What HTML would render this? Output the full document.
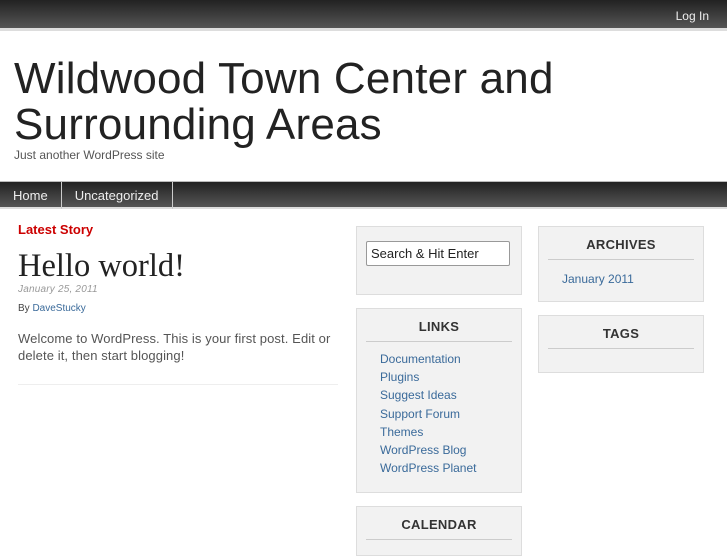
<!DOCTYPE html>
<html><head><meta charset="utf-8"><style>
body{margin:0;width:727px;height:545px;overflow:hidden;background:#fff;font-family:"Liberation Sans",sans-serif;position:relative}
.top{position:absolute;left:0;top:0;width:727px;height:28px;background:linear-gradient(#222,#555);border-bottom:3px solid #ddd}
.login{position:absolute;right:18px;top:9px;color:#eee;font:12px "Liberation Sans",sans-serif}
h1{position:absolute;left:14px;top:56px;margin:0;font:normal 44px/46px "Liberation Sans",sans-serif;color:#222;letter-spacing:0.2px}
.desc{position:absolute;left:14px;top:148px;font:12px "Liberation Sans",sans-serif;color:#555}
.nav{position:absolute;left:0;top:181px;width:727px;height:25px;background:linear-gradient(#222,#555);border-top:1px solid #bbb;border-bottom:2px solid #ddd}
.nav span{float:left;color:#eee;font:13px/27px "Liberation Sans",sans-serif;padding:0 13px;border-right:1px solid #ccc}
.abs{position:absolute}
.box{position:absolute;background:#f2f2f2;border:1px solid #ddd;box-sizing:border-box}
.box h3{margin:0 9px;text-align:center;font:bold 13px "Liberation Sans",sans-serif;color:#333;border-bottom:1px solid #ccc;padding:10px 0 7px;letter-spacing:0.3px}
.lk{color:#3a6a9a;font-size:12px;line-height:18.2px;letter-spacing:0}
</style></head><body>
<div class="top"><span class="login">Log In</span></div>
<h1>Wildwood Town Center and<br>Surrounding Areas</h1>
<div class="desc">Just another WordPress site</div>
<div class="nav"><span>Home</span><span>Uncategorized</span></div>
<div class="abs" style="left:18px;top:222px;color:#c00;font:bold 13px 'Liberation Sans',sans-serif">Latest Story</div>
<div class="abs" style="left:18px;top:248px;font:32.5px 'Liberation Serif',serif;color:#222">Hello world!</div>
<div class="abs" style="left:18px;top:284px;font:italic 10px 'Liberation Sans',sans-serif;color:#999;letter-spacing:0.2px">January 25, 2011</div>
<div class="abs" style="left:18px;top:303px;font:10px 'Liberation Sans',sans-serif;color:#444">By <span style="color:#3a6a9a">DaveStucky</span></div>
<div class="abs" style="left:18px;top:330px;width:330px;font:13px/17px 'Liberation Sans',sans-serif;color:#555;letter-spacing:0.1px">Welcome to WordPress. This is your first post. Edit or delete it, then start blogging!</div>
<div class="abs" style="left:18px;top:384px;width:320px;border-top:1px solid #eee"></div>
<div class="box" style="left:356px;top:226px;width:166px;height:69px"><div style="margin:14px 0 0 9px;width:144px;height:25px;border:1px solid #999;border-radius:2px;background:#fff;box-sizing:border-box;font-size:13px;line-height:23px;padding-left:4px;color:#222">Search &amp; Hit Enter</div></div>
<div class="box" style="left:356px;top:308px;width:166px;height:185px"><h3>LINKS</h3><div class="lk" style="padding:8px 0 0 23px">Documentation<br>Plugins<br>Suggest Ideas<br>Support Forum<br>Themes<br>WordPress Blog<br>WordPress Planet</div></div>
<div class="box" style="left:356px;top:506px;width:166px;height:50px"><h3>CALENDAR</h3></div>
<div class="box" style="left:538px;top:226px;width:166px;height:76px"><h3>ARCHIVES</h3><div class="lk" style="padding:10px 0 0 23px">January 2011</div></div>
<div class="box" style="left:538px;top:315px;width:166px;height:58px"><h3>TAGS</h3></div>
</body></html>
